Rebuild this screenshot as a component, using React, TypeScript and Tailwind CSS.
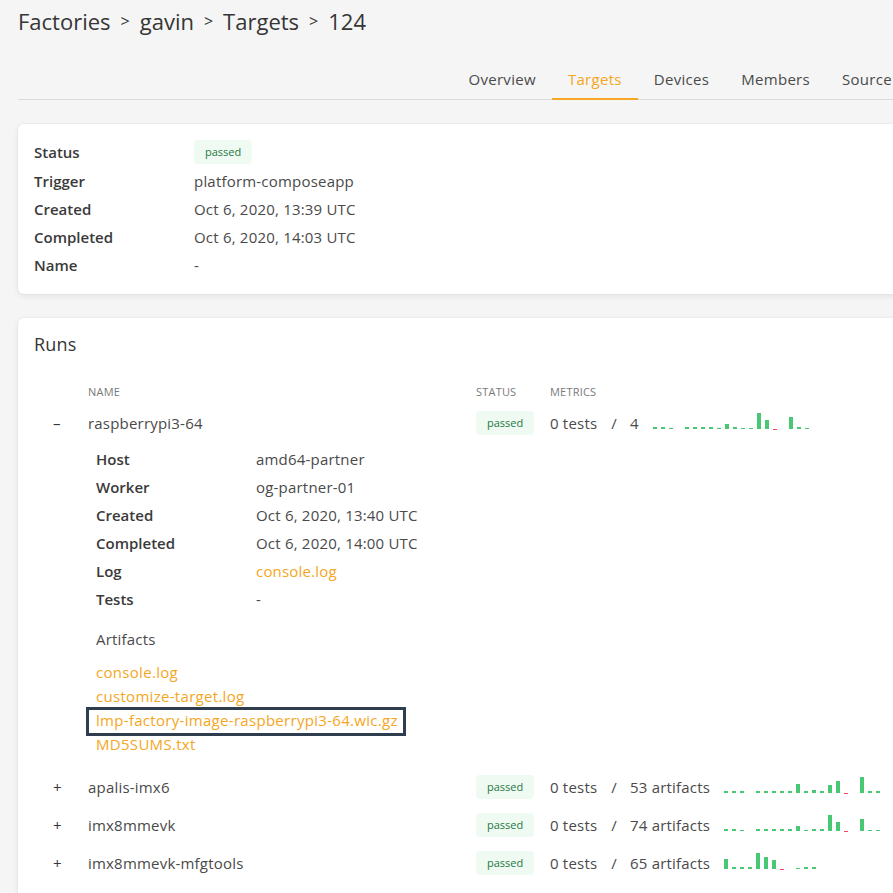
import React from "react";

type Bar = number | "r" | null;

const charts: Record<string, Bar[]> = {
  rpi: [2, 2, 1, null, 2, 2, 2, 2, 1, 5, 2, 1, 1, 16, 9, "r", null, 12, 2, 1],
  apalis: [2, 2, 2, null, 2, 2, 2, 2, 2, 9, 2, 3, 2, 8, 12, "r", null, 16, 2, 2],
  imx: [2, 2, 1, null, 2, 2, 2, 2, 2, 5, 1, 2, 2, 16, 9, "r", null, 12, 1, 1],
  mfg: [10, 2, 2, 2, 16, 12, 9, "r", null, 1, 2, 2],
};

function Chart({ bars }: { bars: Bar[] }) {
  return (
    <svg width={bars.length * 8} height={20} className="block shrink-0">
      {bars.map((b, i) => {
        if (b === null) return null;
        if (b === "r")
          return <rect key={i} x={i * 8} y={16} width={4} height={1} fill="#f14668" />;
        return <rect key={i} x={i * 8} y={16 - b} width={4} height={b} fill="#48c774" />;
      })}
    </svg>
  );
}

function Badge() {
  return (
    <span className="inline-flex items-center h-[24px] px-[11px] rounded-[4px] bg-[#effaf3] text-[#257942] text-[11px] tracking-normal">
      passed
    </span>
  );
}

function Metrics({ value, bars }: { value: string; bars: Bar[] }) {
  return (
    <div className="flex items-center">
      <span>0 tests</span>
      <span className="ml-[14px]">/</span>
      <span className="ml-[13px]">{value}</span>
      <div className="ml-[14px]">
        <Chart bars={bars} />
      </div>
    </div>
  );
}

const tabs = ["Overview", "Targets", "Devices", "Members", "Source"];

const labelCls = "flex items-center text-[#3a3a3a] font-semibold tracking-normal";

export default function App() {
  const font = { fontFamily: '"Open Sans", "Liberation Sans", sans-serif' };
  return (
    <div className="w-[893px] h-[893px] overflow-hidden bg-[#f5f5f5] text-[#4a4a4a]" style={font}>
      <div className="w-[980px] pl-[18px]">
        <h1 className="pt-[6px] text-[22px] leading-[30px] text-[#363636] flex items-center gap-[10px]">
          <span>Factories</span>
          <span className="text-[16px]">&gt;</span>
          <span>gavin</span>
          <span className="text-[16px]">&gt;</span>
          <span>Targets</span>
          <span className="text-[16px]">&gt;</span>
          <span>124</span>
        </h1>

        <div className="w-[890px] mt-[32px] flex justify-end border-b border-[#dbdbdb] text-[15px] tracking-[0.3px]">
          {tabs.map((t) => (
            <div
              key={t}
              className={
                "px-4 pb-[8px] leading-[22px] -mb-px border-b-2 " +
                (t === "Targets" ? "border-[#f5a623] text-[#f5a623]" : "border-transparent text-[#4a4a4a]")
              }
            >
              {t}
            </div>
          ))}
        </div>

        <div className="mt-[24px] w-[920px] bg-white rounded-[6px] shadow-[0_2px_6px_rgba(10,10,10,0.08),0_0_0_1px_rgba(10,10,10,0.02)] pt-[13px] pb-[15px] pl-[16px] text-[15px] tracking-[0.2px]">
          <div className="grid grid-cols-[160px_1fr]">
            <div className={"h-[30px] " + labelCls}>Status</div>
            <div className="h-[30px] flex items-center"><Badge /></div>
            <div className={"h-[28px] " + labelCls}>Trigger</div>
            <div className="h-[28px] flex items-center">platform-composeapp</div>
            <div className={"h-[28px] " + labelCls}>Created</div>
            <div className="h-[28px] flex items-center">Oct 6, 2020, 13:39 UTC</div>
            <div className={"h-[28px] " + labelCls}>Completed</div>
            <div className="h-[28px] flex items-center">Oct 6, 2020, 14:03 UTC</div>
            <div className={"h-[28px] " + labelCls}>Name</div>
            <div className="h-[28px] flex items-center">-</div>
          </div>
        </div>

        <div className="mt-[24px] w-[920px] bg-white rounded-[6px] shadow-[0_2px_6px_rgba(10,10,10,0.08),0_0_0_1px_rgba(10,10,10,0.02)] pt-[14px] pl-[16px] pb-[20px] text-[15px] tracking-[0.2px]">
          <div className="text-[18px] leading-[24px] text-[#363636]">Runs</div>

          <div className="mt-[24px] ml-[12px] grid grid-cols-[42px_388px_74px_1fr]">
            <div />
            <div className="h-[24px] flex items-center text-[11px] uppercase text-[#7a7a7a]">Name</div>
            <div className="h-[24px] flex items-center text-[11px] uppercase text-[#7a7a7a]">Status</div>
            <div className="h-[24px] flex items-center text-[11px] uppercase text-[#7a7a7a]">Metrics</div>

            <div className="h-[38px] flex items-center pl-[7px] text-[#363636]">–</div>
            <div className="h-[38px] flex items-center">raspberrypi3-64</div>
            <div className="h-[38px] flex items-center"><Badge /></div>
            <div className="h-[38px] flex items-center"><Metrics value="4" bars={charts.rpi} /></div>

            <div />
            <div className="col-span-3 pl-[8px] pt-[3px] pb-[12px]">
              <div className="grid grid-cols-[160px_1fr]">
                {[
                  ["Host", "amd64-partner"],
                  ["Worker", "og-partner-01"],
                  ["Created", "Oct 6, 2020, 13:40 UTC"],
                  ["Completed", "Oct 6, 2020, 14:00 UTC"],
                  ["Log", "console.log"],
                  ["Tests", "-"],
                ].map(([k, v]) => (
                  <React.Fragment key={k}>
                    <div className={"h-[28px] " + labelCls}>{k}</div>
                    <div className={"h-[28px] flex items-center " + (k === "Log" ? "text-[#f5a623]" : "")}>{v}</div>
                  </React.Fragment>
                ))}
              </div>
              <div className="mt-[14px] leading-[24px] text-[#4a4a4a]">Artifacts</div>
              <div className="mt-[9px] flex flex-col items-start text-[#f5a623] leading-[24px] tracking-[0.3px]">
                <span>console.log</span>
                <span>customize-target.log</span>
                <span className="relative">
                  lmp-factory-image-raspberrypi3-64.wic.gz
                  <span className="absolute left-[-10px] right-[-8px] top-[-1px] bottom-[-4px] border-[3px] border-[#2f3e4f]" />
                </span>
                <span>MD5SUMS.txt</span>
              </div>
            </div>

            {[
              ["apalis-imx6", "53 artifacts", charts.apalis],
              ["imx8mmevk", "74 artifacts", charts.imx],
              ["imx8mmevk-mfgtools", "65 artifacts", charts.mfg],
            ].map(([name, val, bars]) => (
              <React.Fragment key={name as string}>
                <div className="h-[38px] flex items-center pl-[7px] text-[#363636]">+</div>
                <div className="h-[38px] flex items-center">{name as string}</div>
                <div className="h-[38px] flex items-center"><Badge /></div>
                <div className="h-[38px] flex items-center"><Metrics value={val as string} bars={bars as Bar[]} /></div>
              </React.Fragment>
            ))}
          </div>
        </div>
      </div>
    </div>
  );
}
